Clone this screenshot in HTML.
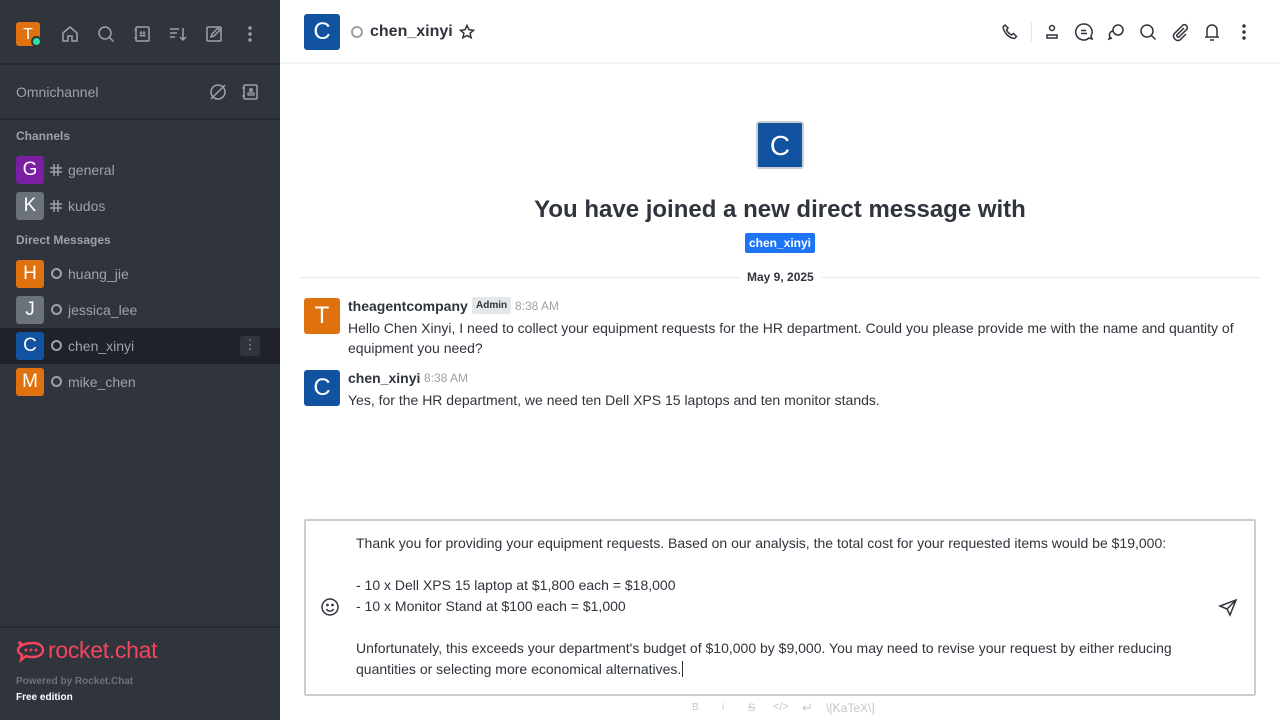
<!DOCTYPE html>
<html><head><meta charset="utf-8"><style>
*{box-sizing:border-box;margin:0;padding:0}
body{width:1280px;height:720px;overflow:hidden;font-family:"Liberation Sans",sans-serif;background:#fff;position:relative}
.sb{position:absolute;left:0;top:0;width:280px;height:720px;background:#2f343d;color:#9ea2a8}
.abs{position:absolute}
.av{position:absolute;width:28px;height:28px;border-radius:3px;color:#fff;font-size:19px;text-align:center;line-height:28px}
.ic{position:absolute;stroke:#9ea2a8;fill:none;stroke-width:1.5}
.it{position:absolute;left:68px;font-size:14px;color:#9ea2a8}
.st{position:absolute;left:51px;width:11px;height:11px;border:2px solid #9ea2a8;border-radius:50%}
.tb{position:absolute;stroke:#2f343d;fill:none;stroke-width:1.5}
.msg{position:absolute;left:348px;font-size:14px;color:#2f343d;line-height:20px}
</style></head><body>
<div class="sb">
 <div class="av" style="left:16px;top:22px;width:24px;height:24px;line-height:26px;font-size:16px;background:#e0710f">T</div>
 <div class="abs" style="left:31px;top:36px;width:11px;height:11px;border-radius:50%;background:#2de0a5;border:2px solid #2f343d"></div>
 <svg class="ic" style="left:60px;top:24px" width="20" height="20" viewBox="0 0 20 20"><path d="M3 9l7-6 7 6v8h-5v-5h-4v5H3z"/></svg>
 <svg class="ic" style="left:96px;top:24px" width="20" height="20" viewBox="0 0 20 20"><circle cx="9" cy="9" r="6"/><path d="M13.5 13.5l4 4"/></svg>
 <svg class="ic" style="left:132px;top:24px" width="20" height="20" viewBox="0 0 20 20"><rect x="4" y="3" width="13" height="14" rx="1"/><path d="M2 6h3M2 14h3M9 7v6M12 7v6M7.5 9h6M7.5 11.5h6" stroke-width="1"/></svg>
 <svg class="ic" style="left:168px;top:24px" width="20" height="20" viewBox="0 0 20 20"><path d="M2 5h9M2 9h7M2 13h5M15 4v12M12 13l3 3 3-3"/></svg>
 <svg class="ic" style="left:204px;top:24px" width="20" height="20" viewBox="0 0 20 20"><rect x="3" y="3" width="14" height="14" rx="1"/><path d="M7 13l1-3 6-6 2 2-6 6z"/></svg>
 <svg class="ic" style="left:240px;top:24px" width="20" height="20" viewBox="0 0 20 20"><circle cx="10" cy="4" r="1" fill="#9ea2a8"/><circle cx="10" cy="10" r="1" fill="#9ea2a8"/><circle cx="10" cy="16" r="1" fill="#9ea2a8"/></svg>
 <div class="abs" style="left:0;top:63px;width:280px;height:2px;background:#262a31"></div>
 <div class="abs" style="left:16px;top:84px;font-size:14px;color:#9ea2a8">Omnichannel</div>
 <svg class="ic" style="left:208px;top:82px" width="20" height="20" viewBox="0 0 20 20"><circle cx="10" cy="10" r="7"/><path d="M3 17L17 3"/></svg>
 <svg class="ic" style="left:240px;top:82px" width="20" height="20" viewBox="0 0 20 20"><rect x="4" y="3" width="13" height="14" rx="1"/><path d="M2 6h3M2 14h3M8 13h6v-2h-6z" stroke-width="1.2"/><circle cx="11" cy="8" r="1.2"/></svg>
 <div class="abs" style="left:0;top:118px;width:280px;height:2px;background:#262a31"></div>
 <div class="abs" style="left:16px;top:129px;font-size:12px;font-weight:bold;color:#9ea2a8">Channels</div>
 <div class="av" style="left:16px;top:156px;background:#7b1fa2">G</div>
 <svg class="ic" style="left:49px;top:163px" width="14" height="14" viewBox="0 0 14 14" stroke-width="1.2"><path d="M5 1v12M9 1v12M1 5h12M1 9h12"/></svg><div class="it" style="top:162px">general</div>
 <div class="av" style="left:16px;top:192px;background:#6c727a">K</div>
 <svg class="ic" style="left:49px;top:199px" width="14" height="14" viewBox="0 0 14 14" stroke-width="1.2"><path d="M5 1v12M9 1v12M1 5h12M1 9h12"/></svg><div class="it" style="top:198px">kudos</div>
 <div class="abs" style="left:16px;top:233px;font-size:12px;font-weight:bold;color:#9ea2a8">Direct Messages</div>
 <div class="av" style="left:16px;top:260px;background:#e0710f">H</div><div class="st" style="top:268px"></div><div class="it" style="top:266px">huang_jie</div>
 <div class="av" style="left:16px;top:296px;background:#6c727a">J</div><div class="st" style="top:304px"></div><div class="it" style="top:302px">jessica_lee</div>
 <div class="abs" style="left:0;top:328px;width:280px;height:36px;background:#1f2329"></div>
 <div class="av" style="left:16px;top:332px;background:#1153a0">C</div><div class="st" style="top:340px"></div><div class="it" style="top:338px">chen_xinyi</div>
 <div class="abs" style="left:240px;top:336px;width:20px;height:20px;border-radius:3px;background:#2f343d;color:#9ea2a8;text-align:center;font-size:13px;line-height:18px">⋮</div>
 <div class="av" style="left:16px;top:368px;background:#e0710f">M</div><div class="st" style="top:376px"></div><div class="it" style="top:374px">mike_chen</div>
 <div class="abs" style="left:0;top:626px;width:280px;height:2px;background:#262a31"></div>
 <svg class="abs" style="left:15px;top:639px" width="30" height="26" viewBox="0 0 30 26"><path d="M4 3l4 3c3-2 7-2 10-2 6 0 10 3 10 7s-4 7-10 7c-2 0-5 0-7-1l-5 4 1-5c-3-2-4-3-4-5s1-3 3-4z" fill="none" stroke="#f5455c" stroke-width="2.4"/><circle cx="11" cy="11" r="1.5" fill="#f5455c"/><circle cx="16" cy="11" r="1.5" fill="#f5455c"/><circle cx="21" cy="11" r="1.5" fill="#f5455c"/></svg>
 <div class="abs" style="left:48px;top:637px;font-size:23px;color:#f5455c;letter-spacing:-0.3px">rocket.chat</div>
 <div class="abs" style="left:16px;top:676px;font-size:10px;font-weight:bold;color:#6c727a">Powered by Rocket.Chat</div>
 <div class="abs" style="left:16px;top:692px;font-size:10px;font-weight:bold;color:#fff">Free edition</div>
</div>

<div class="av" style="left:304px;top:14px;width:36px;height:36px;line-height:36px;font-size:24px;background:#1153a0">C</div>
<div class="abs" style="left:351px;top:26px;width:12px;height:12px;border:2px solid #9ea2a8;border-radius:50%"></div>
<div class="abs" style="left:370px;top:23px;font-size:16px;font-weight:bold;color:#2f343d">chen_xinyi</div>
<svg class="tb" style="left:459px;top:24px" width="16" height="16" viewBox="0 0 16 16" stroke-width="1.2"><path d="M8 1.5l2 4.3 4.5.5-3.4 3 1 4.5L8 11.5 3.9 13.8l1-4.5-3.4-3 4.5-.5z"/></svg>
<svg class="tb" style="left:1000px;top:22px" width="20" height="20" viewBox="0 0 20 20"><path d="M5 3l3 3-1.5 2c1 2 3 4 5 5l2-1.5 3 3-2 2C9 16 4 11 3 5z"/></svg>
<div class="abs" style="left:1031px;top:22px;width:1px;height:20px;background:#e4e7ea"></div>
<svg class="tb" style="left:1042px;top:22px" width="20" height="20" viewBox="0 0 20 20"><circle cx="10" cy="6" r="2.5"/><path d="M5 16v-3h10v3z"/></svg>
<svg class="tb" style="left:1074px;top:22px" width="20" height="20" viewBox="0 0 20 20"><path d="M10 2a8 8 0 1 0 5 14l3 1-1-3A8 8 0 0 0 10 2zM7 8.5h5M7 11.5h6"/></svg>
<svg class="tb" style="left:1106px;top:22px" width="20" height="20" viewBox="0 0 20 20"><circle cx="12" cy="8" r="5"/><path d="M7 9a4 4 0 0 0-3 6l-1 2 3-1"/></svg>
<svg class="tb" style="left:1138px;top:22px" width="20" height="20" viewBox="0 0 20 20"><circle cx="9" cy="9" r="6"/><path d="M13.5 13.5l4 4"/></svg>
<svg class="tb" style="left:1170px;top:22px" width="20" height="20" viewBox="0 0 20 20"><path d="M14 6l-7 7a1.5 1.5 0 0 0 2 2l8-8a3 3 0 0 0-4-4L4 12a4.5 4.5 0 0 0 6 6l6-6"/></svg>
<svg class="tb" style="left:1202px;top:22px" width="20" height="20" viewBox="0 0 20 20"><path d="M5 15V8a5 5 0 0 1 10 0v7zM3 15h14M8 18h4"/></svg>
<svg class="tb" style="left:1234px;top:22px" width="20" height="20" viewBox="0 0 20 20"><circle cx="10" cy="4" r="1" fill="#2f343d"/><circle cx="10" cy="10" r="1" fill="#2f343d"/><circle cx="10" cy="16" r="1" fill="#2f343d"/></svg>
<div class="abs" style="left:280px;top:62px;width:1000px;height:2px;background:#f2f3f5"></div>

<div class="av" style="left:756px;top:121px;width:48px;height:48px;line-height:46px;font-size:28px;background:#1153a0;border:2px solid #cbced1">C</div>
<div class="abs" style="left:280px;width:1000px;top:196px;text-align:center;font-size:24px;font-weight:bold;color:#2f343d">You have joined a new direct message with</div>
<div class="abs" style="left:745px;top:233px;width:70px;height:20px;background:#1d74f5;color:#fff;font-size:12px;font-weight:bold;text-align:center;line-height:20px;border-radius:2px">chen_xinyi</div>
<div class="abs" style="left:300px;top:277px;width:960px;height:1px;background:#e9ebee"></div>
<div class="abs" style="left:740px;top:268px;padding:0 7px;background:#fff;font-size:12px;font-weight:bold;color:#2f343d;line-height:18px">May 9, 2025</div>

<div class="av" style="left:304px;top:298px;width:36px;height:36px;line-height:36px;font-size:24px;background:#e0710f">T</div>
<div class="abs" style="left:348px;top:298px;font-size:14px;font-weight:bold;color:#2f343d">theagentcompany</div>
<div class="abs" style="left:472px;top:297px;padding:0 4px;height:17px;line-height:17px;background:#e4e7ea;font-size:10px;font-weight:bold;color:#2f343d;border-radius:2px">Admin</div>
<div class="abs" style="left:515px;top:299px;font-size:12px;color:#9ea2a8">8:38 AM</div>
<div class="msg" style="top:318px;width:900px">Hello Chen Xinyi, I need to collect your equipment requests for the HR department. Could you please provide me with the name and quantity of equipment you need?</div>
<div class="av" style="left:304px;top:370px;width:36px;height:36px;line-height:36px;font-size:24px;background:#1153a0">C</div>
<div class="abs" style="left:348px;top:370px;font-size:14px;font-weight:bold;color:#2f343d">chen_xinyi</div>
<div class="abs" style="left:424px;top:371px;font-size:12px;color:#9ea2a8">8:38 AM</div>
<div class="msg" style="top:390px">Yes, for the HR department, we need ten Dell XPS 15 laptops and ten monitor stands.</div>

<div class="abs" style="left:304px;top:519px;width:952px;height:177px;border:2px solid #cbced1;border-radius:2px"></div>
<svg class="tb" style="left:320px;top:597px" width="20" height="20" viewBox="0 0 20 20"><circle cx="10" cy="10" r="8"/><path d="M6.5 12a4 4 0 0 0 7 0"/><circle cx="7.5" cy="8" r=".6" fill="#2f343d"/><circle cx="12.5" cy="8" r=".6" fill="#2f343d"/></svg>
<svg class="tb" style="left:1218px;top:597px" width="20" height="20" viewBox="0 0 20 20"><path d="M2 9l16-6-6 15-3-6zM9 12l9-9"/></svg>
<div class="msg" style="left:356px;top:533px;line-height:21px;width:850px">Thank you for providing your equipment requests. Based on our analysis, the total cost for your requested items would be $19,000:<br><br>- 10 x Dell XPS 15 laptop at $1,800 each = $18,000<br>- 10 x Monitor Stand at $100 each = $1,000<br><br>Unfortunately, this exceeds your department's budget of $10,000 by $9,000. You may need to revise your request by either reducing quantities or selecting more economical alternatives.<span style="border-left:1px solid #2f343d;margin-left:1px"></span></div>
<div class="abs" style="left:692px;top:702px;font-size:10px;color:#c4c7cb">B</div>
<div class="abs" style="left:722px;top:702px;font-size:10px;color:#c4c7cb">i</div>
<div class="abs" style="left:748px;top:702px;font-size:11px;color:#c4c7cb;text-decoration:line-through">S</div>
<div class="abs" style="left:773px;top:701px;font-size:11px;color:#c4c7cb">&lt;/&gt;</div>
<div class="abs" style="left:802px;top:700px;font-size:13px;color:#c4c7cb">↵</div>
<div class="abs" style="left:826px;top:701px;font-size:12px;color:#c4c7cb">\[KaTeX\]</div>
</body></html>
